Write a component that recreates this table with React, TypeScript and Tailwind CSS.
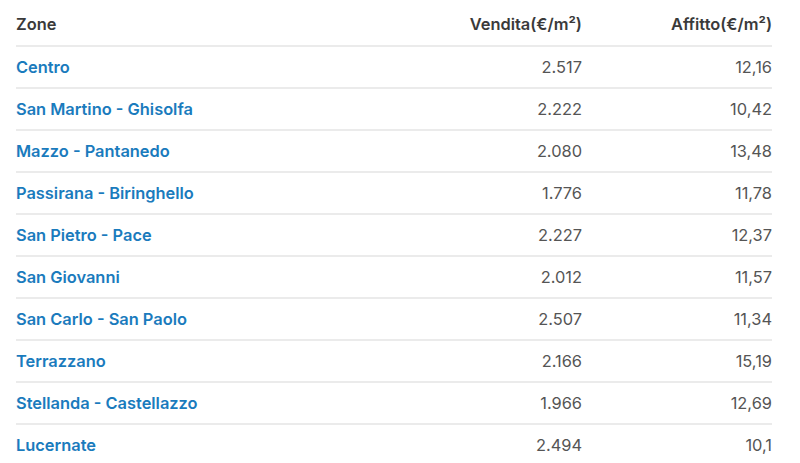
const rows = [
  { zone: "Centro", sale: "2.517", rent: "12,16" },
  { zone: "San Martino - Ghisolfa", sale: "2.222", rent: "10,42" },
  { zone: "Mazzo - Pantanedo", sale: "2.080", rent: "13,48" },
  { zone: "Passirana - Biringhello", sale: "1.776", rent: "11,78" },
  { zone: "San Pietro - Pace", sale: "2.227", rent: "12,37" },
  { zone: "San Giovanni", sale: "2.012", rent: "11,57" },
  { zone: "San Carlo - San Paolo", sale: "2.507", rent: "11,34" },
  { zone: "Terrazzano", sale: "2.166", rent: "15,19" },
  { zone: "Stellanda - Castellazzo", sale: "1.966", rent: "12,69" },
  { zone: "Lucernate", sale: "2.494", rent: "10,1" },
];

const App = () => {
  return (
    <div className="h-[463px] overflow-hidden bg-white font-['Inter',sans-serif] text-[16.4px]">
      <div className="ml-4 mr-[28px]">
        {/* Header */}
        <div className="grid grid-cols-[1fr_190px_190px] h-[47px] items-center border-b-2 border-[#ebebeb] font-semibold text-[#3a3a3a] pt-[4px]">
          <div>Zone</div>
          <div className="text-right">Vendita(€/m²)</div>
          <div className="text-right">Affitto(€/m²)</div>
        </div>

        {/* Rows */}
        {rows.map((row, index) => (
          <div
            key={index}
            className="grid grid-cols-[1fr_190px_190px] h-[42px] items-center border-b-2 border-[#ebebeb]"
          >
            <div className="font-semibold text-[#1a7bbd]">{row.zone}</div>
            <div className="text-right text-[#555555]">{row.sale}</div>
            <div className="text-right text-[#555555]">{row.rent}</div>
          </div>
        ))}
      </div>
    </div>
  );
};

export default App;
